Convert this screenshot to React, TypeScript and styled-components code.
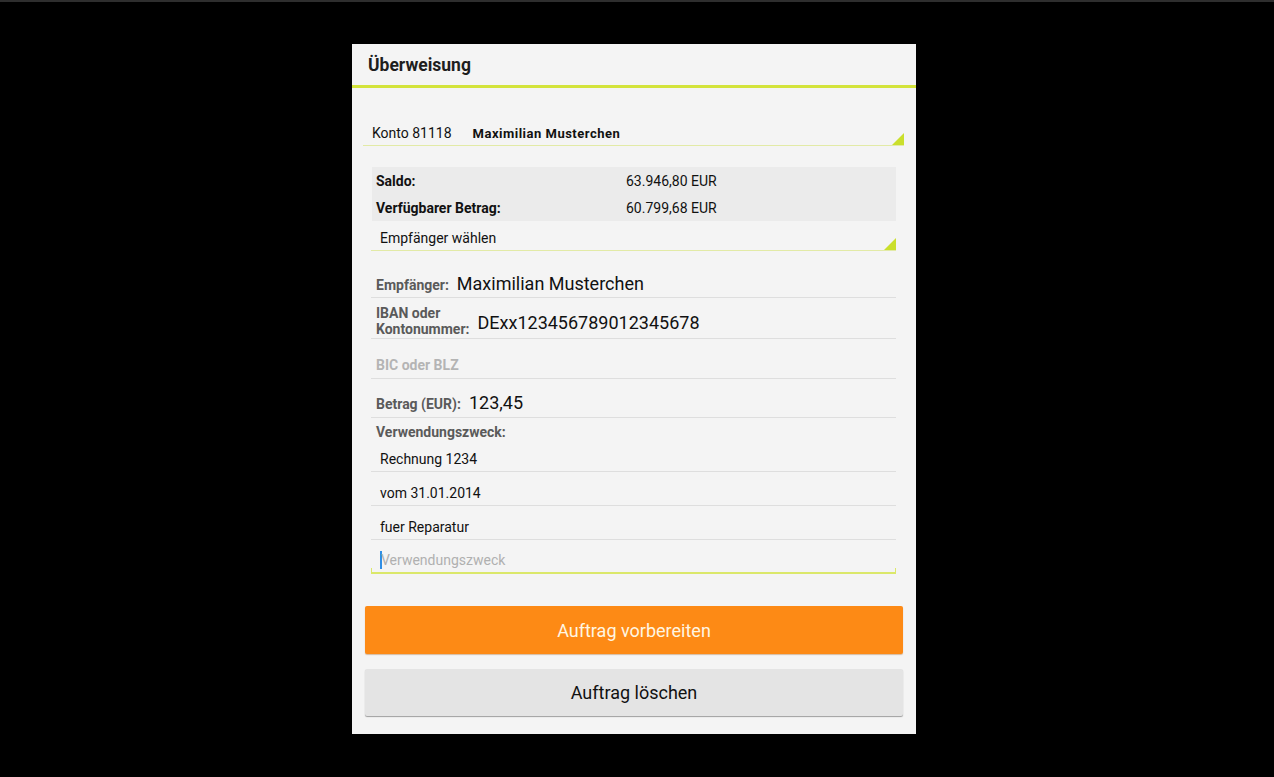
import React from "react";
import styled, { createGlobalStyle } from "styled-components";

const GlobalStyle = createGlobalStyle`
  html, body {
    margin: 0;
    padding: 0;
    background: #000;
  }
  body {
    font-family: Roboto, "Noto Sans", "Liberation Sans", sans-serif;
    -webkit-font-smoothing: antialiased;
  }
`;

const Screen = styled.div`
  width: 1274px;
  height: 777px;
  background: #000;
  border-top: 2px solid #2e2e2e;
  box-sizing: border-box;
  overflow: hidden;
`;

const Dialog = styled.div`
  width: 564px;
  margin: 42px 0 0 352px;
  background: #f4f4f4;
  padding-bottom: 18px;
`;

const Header = styled.div`
  height: 41px;
  line-height: 43px;
  padding-left: 16px;
  border-bottom: 3px solid #d3e33a;
  font-size: 17.5px;
  font-weight: 700;
  color: #1e1e1e;
`;

const Content = styled.div`
  padding: 0 12px 0 11px;
`;

const Spinner = styled.div<{ $inset?: boolean; $top: number; $pad: number }>`
  position: relative;
  display: flex;
  align-items: center;
  margin: ${(p) => p.$top}px ${(p) => (p.$inset ? 8 : 0)}px 0
    ${(p) => (p.$inset ? 8 : 0)}px;
  padding: ${(p) => p.$pad}px 0 0 9px;
  height: 24px;
  border-bottom: 1px solid #e2eaa6;
  font-size: 14px;
  color: #111;

  &::after {
    content: "";
    position: absolute;
    right: 0;
    bottom: 0;
    width: 0;
    height: 0;
    border-left: 12px solid transparent;
    border-bottom: 12px solid #cadf2c;
  }
`;

const AccountNo = styled.span`
  margin-right: 21px;
`;

const AccountName = styled.span`
  font-size: 13px;
  font-weight: 700;
  letter-spacing: 0.5px;
  color: #111;
`;

const BalanceBox = styled.div`
  margin: 21px 8px 0 9px;
  background: #ebebeb;
  padding: 0 4px;
`;

const BalanceRow = styled.div`
  display: grid;
  grid-template-columns: 250px 1fr;
  height: 27px;
  align-items: center;
  font-size: 14px;
  color: #111;
`;

const BalanceLabel = styled.span`
  font-weight: 700;
`;

const Field = styled.div<{ $top: number; $bottom: number }>`
  display: flex;
  align-items: center;
  gap: 8px;
  margin: 0 8px;
  padding: ${(p) => p.$top}px 0 ${(p) => p.$bottom}px 5px;
  border-bottom: 1px solid #dedede;
`;

const FieldLabel = styled.span`
  font-size: 14px;
  font-weight: 700;
  line-height: 16px;
  color: #5a5a5a;
  white-space: nowrap;
`;

const FieldValue = styled.span<{ $shift?: number }>`
  font-size: 18px;
  line-height: 24px;
  color: #111;
  margin-top: ${(p) => p.$shift ?? 0}px;
`;

const Hint = styled.span`
  font-size: 14px;
  font-weight: 700;
  line-height: 24px;
  color: #b4b4b4;
`;

const SectionLabel = styled.div`
  margin: 0 8px;
  padding: 6px 0 0 5px;
  font-size: 14px;
  font-weight: 700;
  line-height: 16px;
  color: #5a5a5a;
`;

const PurposeField = styled.div<{ $top: number; $focused?: boolean }>`
  position: relative;
  display: flex;
  align-items: center;
  margin: 0 8px;
  padding: ${(p) => p.$top}px 0 0 9px;
  height: 24px;
  font-size: 14px;
  color: #111;
  border-bottom: ${(p) => (p.$focused ? "2px solid #dbe86a" : "1px solid #dedede")};
`;

const Placeholder = styled.span`
  color: #b0b0b0;
`;

const Caret = styled.span`
  display: inline-block;
  width: 2px;
  height: 18px;
  background: #2f8ee5;
  margin-right: -1px;
`;

const Tick = styled.span<{ $side: "left" | "right" }>`
  position: absolute;
  bottom: 0;
  ${(p) => p.$side}: 0;
  width: 1px;
  height: 4px;
  background: #dbe86a;
`;

const Buttons = styled.div`
  display: flex;
  flex-direction: column;
  gap: 15px;
  margin: 32px 13px 0;
`;

const Button = styled.button<{ $primary?: boolean }>`
  height: ${(p) => (p.$primary ? 48 : 47)}px;
  border: none;
  border-radius: 2px;
  font-family: Roboto, "Noto Sans", "Liberation Sans", sans-serif;
  font-size: 18px;
  background: ${(p) => (p.$primary ? "#fd8a15" : "#e4e4e4")};
  color: ${(p) => (p.$primary ? "#fff6e2" : "#111")};
  box-shadow: ${(p) =>
    p.$primary ? "0 1px 1px rgba(160,80,0,0.35)" : "0 1px 1px rgba(0,0,0,0.35)"};
  padding: 0;
  cursor: pointer;
`;

export default function App() {
  return (
    <>
      <GlobalStyle />
      <Screen>
        <Dialog>
          <Header>Überweisung</Header>
          <Content>
            <Spinner $top={30} $pad={3}>
              <AccountNo>Konto 81118</AccountNo>
              <AccountName>Maximilian Musterchen</AccountName>
            </Spinner>

            <BalanceBox>
              <BalanceRow>
                <BalanceLabel>Saldo:</BalanceLabel>
                <span>63.946,80 EUR</span>
              </BalanceRow>
              <BalanceRow>
                <BalanceLabel>Verfügbarer Betrag:</BalanceLabel>
                <span>60.799,68 EUR</span>
              </BalanceRow>
            </BalanceBox>

            <Spinner $inset $top={0} $pad={5}>
              Empfänger wählen
            </Spinner>

            <Field $top={22} $bottom={1}>
              <FieldLabel>Empfänger:</FieldLabel>
              <FieldValue $shift={-1}>Maximilian Musterchen</FieldValue>
            </Field>

            <Field $top={7} $bottom={1}>
              <FieldLabel>
                IBAN oder
                <br />
                Kontonummer:
              </FieldLabel>
              <FieldValue $shift={4}>DExx123456789012345678</FieldValue>
            </Field>

            <Field $top={14} $bottom={1}>
              <Hint>BIC oder BLZ</Hint>
            </Field>

            <Field $top={13} $bottom={2}>
              <FieldLabel>Betrag (EUR):</FieldLabel>
              <FieldValue $shift={-1}>123,45</FieldValue>
            </Field>

            <SectionLabel>Verwendungszweck:</SectionLabel>

            <PurposeField $top={7}>Rechnung 1234</PurposeField>
            <PurposeField $top={9}>vom 31.01.2014</PurposeField>
            <PurposeField $top={9}>fuer Reparatur</PurposeField>
            <PurposeField $top={8} $focused>
              <Caret />
              <Placeholder>Verwendungszweck</Placeholder>
              <Tick $side="left" />
              <Tick $side="right" />
            </PurposeField>
          </Content>

          <Buttons>
            <Button $primary>Auftrag vorbereiten</Button>
            <Button>Auftrag löschen</Button>
          </Buttons>
        </Dialog>
      </Screen>
    </>
  );
}
